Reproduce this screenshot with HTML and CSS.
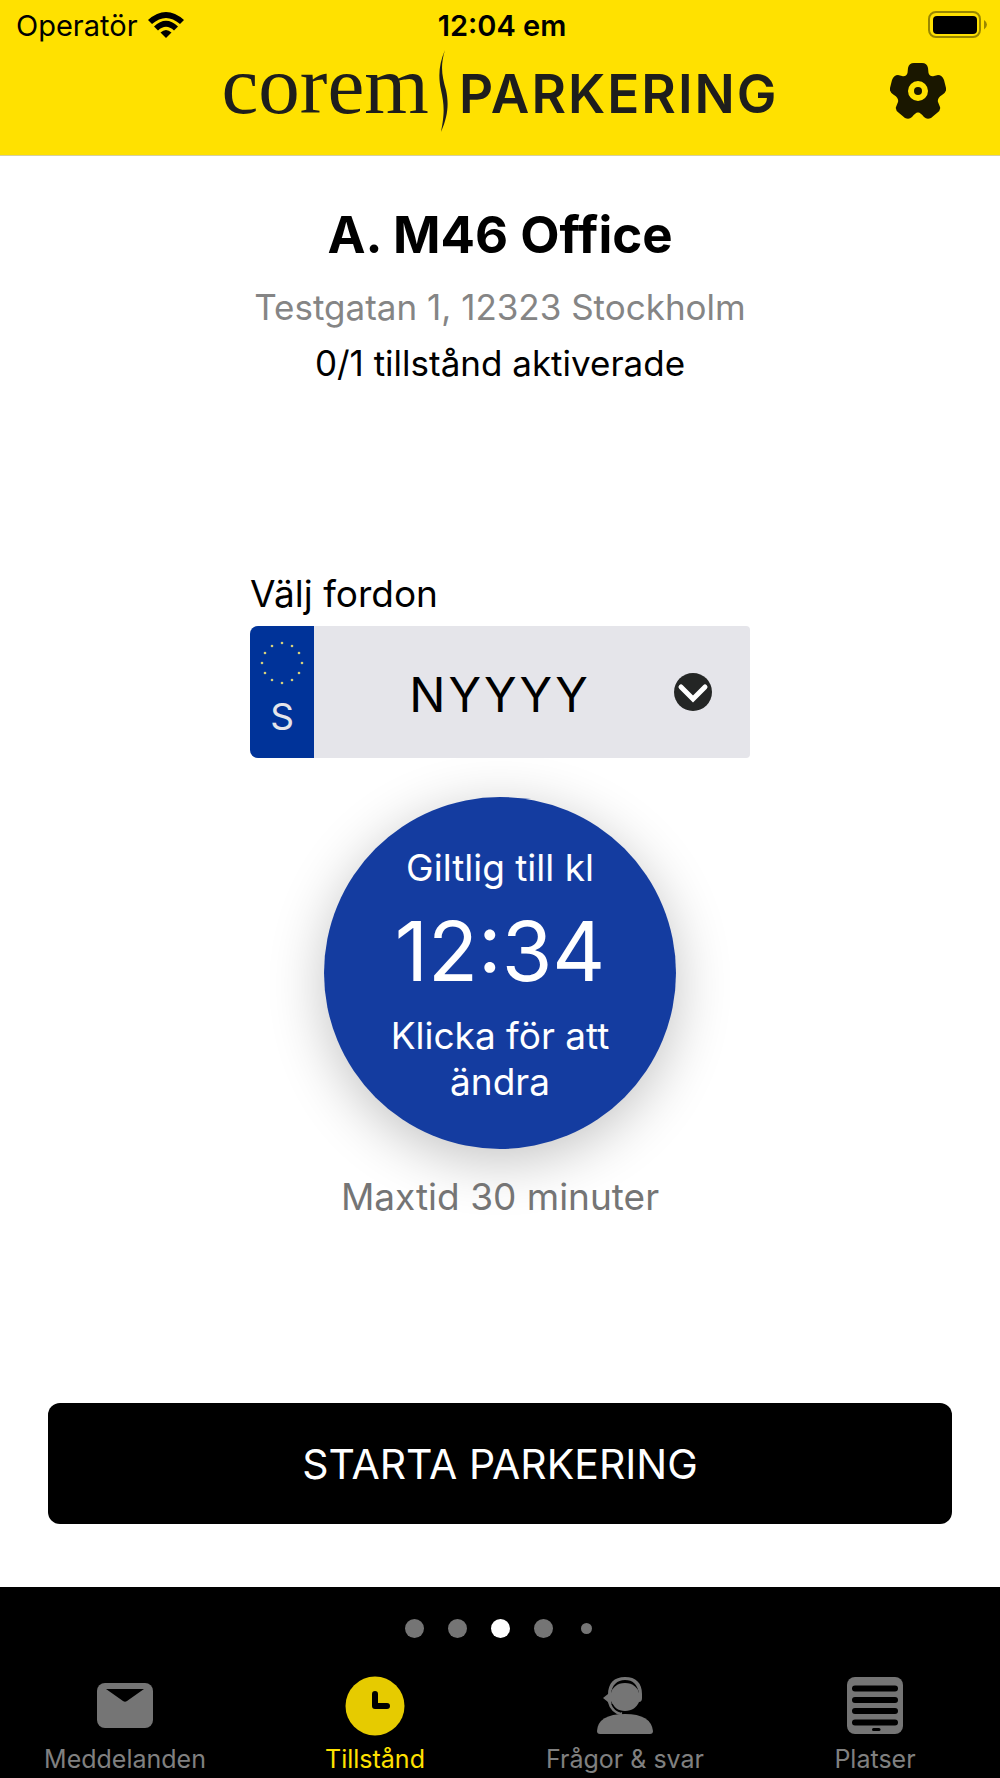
FILE: index.html
```html
<!DOCTYPE html>
<html lang="sv">
<head>
    <meta charset="UTF-8">
    <meta name="viewport" content="width=device-width, initial-scale=1.0">
    <title>Corem Parkering</title>
    <link rel="stylesheet" href="styles.css">
</head>
<body>
    <header class="header">
        <div class="status-bar">
            <div class="carrier">
                <span>Operatör</span>
                <svg class="wifi" viewBox="0 0 36 28" width="36" height="28" aria-hidden="true">
                    <path d="M0 9Q18-7 36 9L32 13Q18 1 4 13Z"/>
                    <path d="M6 15.500Q18 4 30 15.500L26 19.500Q18 12 10 19.500Z"/>
                    <path d="M12.500 21.500Q18 16.500 23.500 21.500L18 27Z"/>
                </svg>
            </div>
            <span class="clock">12:04 em</span>
            <svg class="battery" viewBox="0 0 60 28" width="60" height="28" aria-hidden="true">
                <rect x="1" y="1" width="51" height="25" rx="7" fill="none" stroke="#998700" stroke-width="2"/>
                <rect x="5" y="5" width="44" height="18" rx="4"/>
                <path d="M56 9Q59 11 59 13.500Q59 16 56 18.500Z" fill="#998700"/>
            </svg>
        </div>
        <div class="title-bar">
            <div class="logo">
                <span class="logo-corem">corem</span>
                <svg class="logo-line" viewBox="0 0 10 82" width="10" height="82" aria-hidden="true">
                    <path d="M6 0C0 14-1 26 2 40C5 54 6 62 2 82C9 66 10 54 7 40C3 26 1 16 6 0Z"/>
                </svg>
                <span class="logo-parkering">PARKERING</span>
            </div>
            <button class="settings" type="button" aria-label="Inställningar">
                <svg viewBox="0 0 56 56" width="56" height="56" aria-hidden="true">
                    <path fill="#1a1700" fill-rule="evenodd" d="M24 0H32Q37 0 38 5L38.500 10Q40 14 44 13L48 12Q52 12 54 17L56 25Q57 29 52 32Q47 35 48 39L50 44Q51 47 47 50L41 55Q37 57 34 54Q30 49 28 49.500Q26 49 22 54Q19 57 15 55L9 50Q5 47 6 44L8 39Q9 35 4 32Q-1 29 0 25L2 17Q4 12 8 12L12 13Q16 14 17.500 10L18 5Q19 0 24 0ZM28 18A10 10 0 1 0 28 38A10 10 0 1 0 28 18Z"/>
                    <circle cx="28" cy="28" r="4" fill="#1a1700"/>
                </svg>
            </button>
        </div>
    </header>

    <main class="content">
        <section class="place">
            <h1>A. M46 Office</h1>
            <p class="address">Testgatan 1, 12323 Stockholm</p>
            <p>0/1 tillstånd aktiverade</p>
        </section>

        <section class="permit">
            <label class="vehicle-label" for="vehicle">Välj fordon</label>
            <div class="plate">
                <div class="plate-country">
                    <svg viewBox="0 0 44 44" width="44" height="44" fill="#d6cf7a" aria-hidden="true">
                        <circle cx="22" cy="2" r="1.300"/>
                        <circle cx="32" cy="5" r="1.300"/>
                        <circle cx="39" cy="12" r="1.300"/>
                        <circle cx="42" cy="22" r="1.300"/>
                        <circle cx="39" cy="32" r="1.300"/>
                        <circle cx="32" cy="39" r="1.300"/>
                        <circle cx="22" cy="42" r="1.300"/>
                        <circle cx="12" cy="39" r="1.300"/>
                        <circle cx="5" cy="32" r="1.300"/>
                        <circle cx="2" cy="22" r="1.300"/>
                        <circle cx="5" cy="12" r="1.300"/>
                        <circle cx="12" cy="5" r="1.300"/>
                    </svg>
                    <span>S</span>
                </div>
                <select class="vehicle" id="vehicle">
                    <option>NYYYY</option>
                </select>
                <svg class="chevron" viewBox="0 0 38 38" width="38" height="38" aria-hidden="true">
                    <circle cx="19" cy="19" r="19" fill="#242625"/>
                    <path d="M7 14L19 26L31 14" fill="none" stroke="#fff" stroke-width="5" stroke-linecap="round"/>
                </svg>
            </div>
            <button class="time-button" type="button">
                <span>Giltlig till kl</span>
                <span class="time">12:34</span>
                <span>Klicka för att ändra</span>
            </button>
            <p class="max-time">Maxtid 30 minuter</p>
        </section>

        <button class="start-button" type="button">STARTA PARKERING</button>
    </main>

    <footer class="footer">
        <div class="dots">
            <span class="dot"></span>
            <span class="dot"></span>
            <span class="dot active"></span>
            <span class="dot"></span>
            <span class="dot small"></span>
        </div>
        <nav class="tabs">
            <a class="tab" href="#meddelanden">
                <svg viewBox="0 0 60 60" width="60" height="60" aria-hidden="true">
                    <rect x="2" y="7" width="56" height="45" rx="8" fill="#757575"/>
                    <path d="M11 13H49L32 25Q30 26.500 28 25Z" fill="#000"/>
                </svg>
                <span>Meddelanden</span>
            </a>
            <a class="tab selected" href="#tillstand">
                <svg viewBox="0 0 60 60" width="60" height="60" aria-hidden="true">
                    <circle cx="30" cy="30" r="29.500" fill="#e6cb00"/>
                    <path d="M30 18V30H42" fill="none" stroke="#000" stroke-width="6" stroke-linecap="round" stroke-linejoin="round"/>
                </svg>
                <span>Tillstånd</span>
            </a>
            <a class="tab" href="#fragor">
                <svg viewBox="0 0 60 60" width="60" height="60" fill="#757575" aria-hidden="true">
                    <path d="M2 55Q3 38 30 38Q56 38 58 55Q58 58 55 58H5Q2 58 2 55Z"/>
                    <path d="M30 7C38 7 43 12 44 17L44 26C42 31 37 35 30 35C23 35 18 31 16 25L16 17C17 12 22 7 30 7Z"/>
                    <path d="M13 19C13 7 19 1 30 1C41 1 47 7 47 18V22Q47 26 44 26L44 17C42 8 38 4 30 4C22 4 17 9 16 18V26L13 26L8 22L13 18Z"/>
                    <path d="M14 25C16 33 20 37 27 38" fill="none" stroke="#757575" stroke-width="3"/>
                    <path d="M17 28C19 33 22 35 26 36" fill="none" stroke="#000" stroke-width="1.500"/>
                </svg>
                <span>Frågor &amp; svar</span>
            </a>
            <a class="tab" href="#platser">
                <svg viewBox="0 0 60 60" width="60" height="60" aria-hidden="true">
                    <rect x="2" y="1" width="56" height="57" rx="8" fill="#757575"/>
                    <path d="M10 12.500H50M10 24H50M10 35H50M10 46.500H50" stroke="#000" stroke-width="6" stroke-linecap="round"/>
                    <path d="M28.500 53.500H34" stroke="#000" stroke-width="3" stroke-linecap="round"/>
                </svg>
                <span>Platser</span>
            </a>
        </nav>
    </footer>
</body>
</html>
```
FILE: styles.css
```css
* {
    box-sizing: border-box;
}

body {
    margin: 0;
    min-height: 100vh;
    display: flex;
    flex-direction: column;
    font-family: Inter, "Liberation Sans", sans-serif;
    font-size: 37px;
    color: #000;
    background-color: #fff;
}

h1, p {
    margin: 0;
}

button {
    border: none;
    padding: 0;
    font-family: inherit;
    cursor: pointer;
}

svg {
    display: block;
    flex-shrink: 0;
}

/* Header */
.header {
    background-color: #ffe100;
    border-bottom: 1px solid #d6d0a0;
}

.status-bar {
    display: grid;
    grid-template-columns: 1fr auto 1fr;
    align-items: center;
    height: 50px;
    padding: 0 12px 0 16px;
    font-size: 29px;
}

.carrier {
    display: flex;
    align-items: center;
    gap: 10px;
}

.clock {
    font-weight: 600;
}

.battery {
    justify-self: end;
}

.title-bar {
    display: grid;
    grid-template-columns: 1fr auto 1fr;
    align-items: center;
    height: 105px;
    padding: 0 54px 24px;
}

.logo {
    grid-column: 2;
    display: flex;
    align-items: baseline;
    gap: 10px;
    color: #1e1e1c;
    line-height: 70px;
}

.logo-corem {
    font-family: "Liberation Serif", serif;
    font-size: 83px;
}

.logo-line {
    align-self: center;
    fill: #1e1e1c;
}

.logo-parkering {
    font-size: 53px;
    font-weight: 600;
    letter-spacing: 2px;
}

.settings {
    justify-self: end;
    background: none;
}

/* Content */
.content {
    flex: 1;
    display: flex;
    flex-direction: column;
    align-items: center;
    justify-content: space-between;
    padding: 47px 48px 63px;
}

.place {
    text-align: center;
    font-size: 35px;
    line-height: 56px;
}

.place h1 {
    font-size: 51px;
    line-height: 64px;
    margin-bottom: 12px;
}

.address {
    color: #858585;
}

.permit {
    width: 500px;
    max-width: 100%;
    display: flex;
    flex-direction: column;
    padding-bottom: 12px;
}

.vehicle-label {
    line-height: 64px;
}

.plate {
    position: relative;
    display: flex;
    height: 132px;
    margin-bottom: 39px;
    border-radius: 8px 4px 4px 8px;
    overflow: hidden;
    background-color: #e5e5ea;
}

.plate-country {
    width: 64px;
    display: flex;
    flex-direction: column;
    align-items: center;
    gap: 12px;
    padding-top: 15px;
    line-height: 40px;
    color: #e5e5ea;
    background-color: #039;
}

.vehicle {
    appearance: none;
    flex: 1;
    min-width: 0;
    border: none;
    padding: 6px 64px 0 0;
    font-family: inherit;
    font-size: 48px;
    letter-spacing: 3px;
    text-align: center;
    text-align-last: center;
    color: #000;
    background: none;
}

/* Sits over the right end of the select */
.chevron {
    position: absolute;
    top: 47px;
    right: 38px;
    pointer-events: none;
}

.time-button {
    align-self: center;
    width: 352px;
    height: 352px;
    display: flex;
    flex-direction: column;
    align-items: center;
    justify-content: center;
    padding: 4px 56px 0;
    border-radius: 50%;
    font-size: 37px;
    line-height: 46px;
    color: #fff;
    background-color: #143ca0;
    box-shadow: 0 12px 56px rgba(0, 0, 0, 0.24);
}

.time {
    font-size: 82px;
    line-height: 122px;
}

.max-time {
    margin-top: 24px;
    line-height: 48px;
    text-align: center;
    color: #757575;
}

.start-button {
    width: 100%;
    height: 121px;
    border-radius: 12px;
    font-size: 41px;
    color: #fff;
    background-color: #000;
}

/* Footer */
.footer {
    background-color: #000;
}

.dots {
    display: flex;
    align-items: center;
    justify-content: center;
    gap: 24px;
    padding-top: 32px;
    height: 51px;
}

.dot {
    width: 19px;
    height: 19px;
    border-radius: 50%;
    background-color: #757575;
}

.dot.active {
    background-color: #fff;
}

.dot.small {
    width: 11px;
    height: 11px;
    margin: 0 4px;
}

.tabs {
    display: grid;
    grid-template-columns: repeat(4, 1fr);
    padding-top: 38px;
}

.tab {
    display: flex;
    flex-direction: column;
    align-items: center;
    gap: 6px;
    padding-bottom: 2px;
    font-size: 25px;
    line-height: 34px;
    color: #808080;
    text-decoration: none;
}

.tab.selected {
    color: #ffe100;
}
```
